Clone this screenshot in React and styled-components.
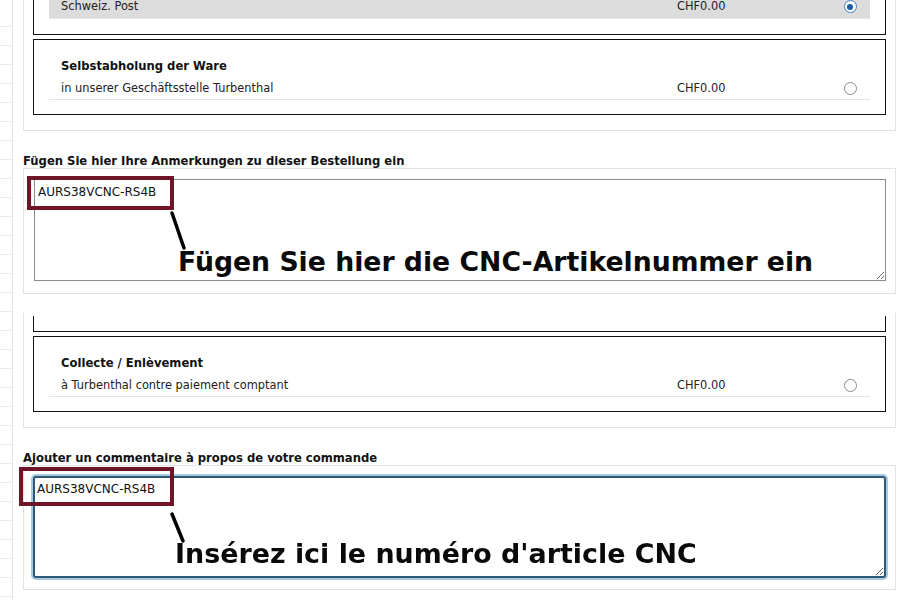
import React, { useEffect, useRef } from "react";
import styled, { createGlobalStyle, css } from "styled-components";

const GlobalStyle = createGlobalStyle`
  html, body {
    margin: 0;
    padding: 0;
    background: #ffffff;
  }
  body {
    font-family: "DejaVu Sans", Verdana, sans-serif;
    color: #222;
  }
`;

const Page = styled.div`
  width: 900px;
  height: 600px;
  display: flex;
  overflow: hidden;
  background: #fff;
`;

// spreadsheet-like strip along the left edge
const Gutter = styled.div`
  width: 12px;
  flex: none;
  border-right: 1px solid #e2e2e2;
  background-image: repeating-linear-gradient(
    to bottom,
    transparent 0,
    transparent 18px,
    #ebebeb 18px,
    #ebebeb 19px
  );
  background-position: 0 8px;
`;

const Main = styled.div`
  flex: 1;
  display: flex;
  flex-direction: column;
`;

const Shot = styled.section`
  height: 300px;
  overflow: hidden;
  padding: ${(p) => (p.$cut ? "13px" : "0")} 4px 0 10px;
  box-sizing: border-box;
`;

const Panel = styled.div`
  position: relative;
  border: 1px solid #e3e3e3;
  padding: ${(p) => p.$pad || "0 9px 15px"};
  ${(p) =>
    p.$cut &&
    css`
      border-top: none;
    `}
`;

const ShipBox = styled.div`
  border: 1px solid #111;
  padding: 16px 15px 14px;
  ${(p) =>
    p.$cut &&
    css`
      border-top: none;
      padding: 0 15px 15px;
    `}
  & + & {
    margin-top: 4px;
  }
`;

const ShipTitle = styled.div`
  font-size: 11.6px;
  font-weight: bold;
  color: #111;
  line-height: 20px;
  padding-left: 12px;
  margin-bottom: 2px;
`;

const OptionRow = styled.div`
  display: flex;
  padding-left: 12px;
  height: ${(p) => (p.$short ? "18px" : "21px")};
  line-height: ${(p) => (p.$short ? "13px" : "21px")};
  align-items: ${(p) => (p.$short ? "flex-start" : "center")};
  border-bottom: 1px solid #e4e4e4;
  background: ${(p) => (p.$selected ? "#dcdcdc" : "transparent")};
  font-size: 11.4px;
  color: #222;
`;

const OptionName = styled.span`
  flex: 1;
`;

const Price = styled.span`
  width: 160px;
`;

const RadioCell = styled.span`
  width: 26px;
  display: flex;
  justify-content: center;
  margin-right: 7px;
`;

const Radio = styled.span`
  width: 13px;
  height: 13px;
  box-sizing: border-box;
  border-radius: 50%;
  background: #fff;
  border: 1.5px solid ${(p) => (p.$checked ? "#3f7fc6" : "#8a8a8a")};
  display: flex;
  align-items: center;
  justify-content: center;
  &::after {
    content: "";
    display: ${(p) => (p.$checked ? "block" : "none")};
    width: 6px;
    height: 6px;
    border-radius: 50%;
    background: #1b5aa3;
  }
`;

const FieldLabel = styled.div`
  font-size: 11.6px;
  font-weight: bold;
  color: #111;
  line-height: 14px;
  margin-top: 23px;
`;

const Note = styled.textarea`
  display: block;
  width: 100%;
  height: 102px;
  box-sizing: border-box;
  margin: 0;
  padding: 5px 3px;
  font-family: "DejaVu Sans", Verdana, sans-serif;
  font-size: 12px;
  color: #111;
  border: 1px solid #8c8c8c;
  border-radius: 0;
  outline: none;
  resize: both;
  ${(p) =>
    p.$focused &&
    css`
      border: 2px solid #2d5877;
      border-radius: 3px;
      box-shadow: 0 0 0 2px #a9c9e2;
      padding: 4px 2px;
    `}
`;

const Callout = styled.div`
  position: absolute;
  left: ${(p) => p.$x}px;
  top: ${(p) => p.$y}px;
  width: ${(p) => p.$w}px;
  height: ${(p) => p.$h}px;
  box-sizing: border-box;
  border: 4px solid #6e1628;
  pointer-events: none;
`;

const Pointer = styled.svg`
  position: absolute;
  left: ${(p) => p.$x}px;
  top: ${(p) => p.$y}px;
  overflow: visible;
  pointer-events: none;
`;

const Hint = styled.div`
  position: absolute;
  left: ${(p) => p.$x}px;
  top: ${(p) => p.$y}px;
  font-family: "DejaVu Sans", Verdana, sans-serif;
  font-size: ${(p) => p.$size}px;
  font-weight: bold;
  color: #0a0a0a;
  white-space: nowrap;
  line-height: 30px;
  pointer-events: none;
`;

function Option({ name, price, checked, selected, short }) {
  return (
    <OptionRow $selected={selected} $short={short}>
      <OptionName>{name}</OptionName>
      <Price>{price}</Price>
      <RadioCell>
        <Radio $checked={checked} />
      </RadioCell>
    </OptionRow>
  );
}

function Annotated({ value, focused, box, line, hint, hintPos }) {
  const ref = useRef(null);

  useEffect(() => {
    if (focused && ref.current) {
      const el = ref.current;
      el.focus();
      el.setSelectionRange(el.value.length, el.value.length);
    }
  }, [focused]);

  return (
    <Panel $pad={focused ? "10px 9px 11px 9px" : "10px 9px 12px 10px"}>
      <Note ref={ref} defaultValue={value} $focused={focused} spellCheck={false} />
      <Callout $x={box.x} $y={box.y} $w={box.w} $h={box.h} />
      <Pointer $x={line.x} $y={line.y} width={line.w} height={line.h}>
        <line
          x1="0"
          y1="0"
          x2={line.w}
          y2={line.h}
          stroke="#000"
          strokeWidth="3.5"
          strokeLinecap="round"
        />
      </Pointer>
      <Hint $x={hintPos.x} $y={hintPos.y} $size={hintPos.size}>
        {hint}
      </Hint>
    </Panel>
  );
}

export default function App() {
  return (
    <>
      <GlobalStyle />
      <Page>
        <Gutter />
        <Main>
          <Shot>
            <Panel $cut>
              <ShipBox $cut>
                <Option name="Schweiz. Post" price="CHF0.00" checked selected short />
              </ShipBox>
              <ShipBox>
                <ShipTitle>Selbstabholung der Ware</ShipTitle>
                <Option name="in unserer Geschäftsstelle Turbenthal" price="CHF0.00" />
              </ShipBox>
            </Panel>
            <FieldLabel>Fügen Sie hier Ihre Anmerkungen zu dieser Bestellung ein</FieldLabel>
            <Annotated
              value="AURS38VCNC-RS4B"
              box={{ x: 3, y: 7, w: 147, h: 34 }}
              line={{ x: 148, y: 44, w: 12, h: 35 }}
              hint="Fügen Sie hier die CNC-Artikelnummer ein"
              hintPos={{ x: 154, y: 78, size: 26.7 }}
            />
          </Shot>
          <Shot $cut>
            <Panel $cut $pad="3px 9px 15px">
              <ShipBox $cut />
              <ShipBox>
                <ShipTitle>Collecte / Enlèvement</ShipTitle>
                <Option name="à Turbenthal contre paiement comptant" price="CHF0.00" />
              </ShipBox>
            </Panel>
            <FieldLabel>Ajouter un commentaire à propos de votre commande</FieldLabel>
            <Annotated
              focused
              value="AURS38VCNC-RS4B"
              box={{ x: -5, y: 1, w: 155, h: 39 }}
              line={{ x: 148, y: 48, w: 11, h: 27 }}
              hint="Insérez ici le numéro d'article CNC"
              hintPos={{ x: 151, y: 73, size: 26.9 }}
            />
          </Shot>
        </Main>
      </Page>
    </>
  );
}
